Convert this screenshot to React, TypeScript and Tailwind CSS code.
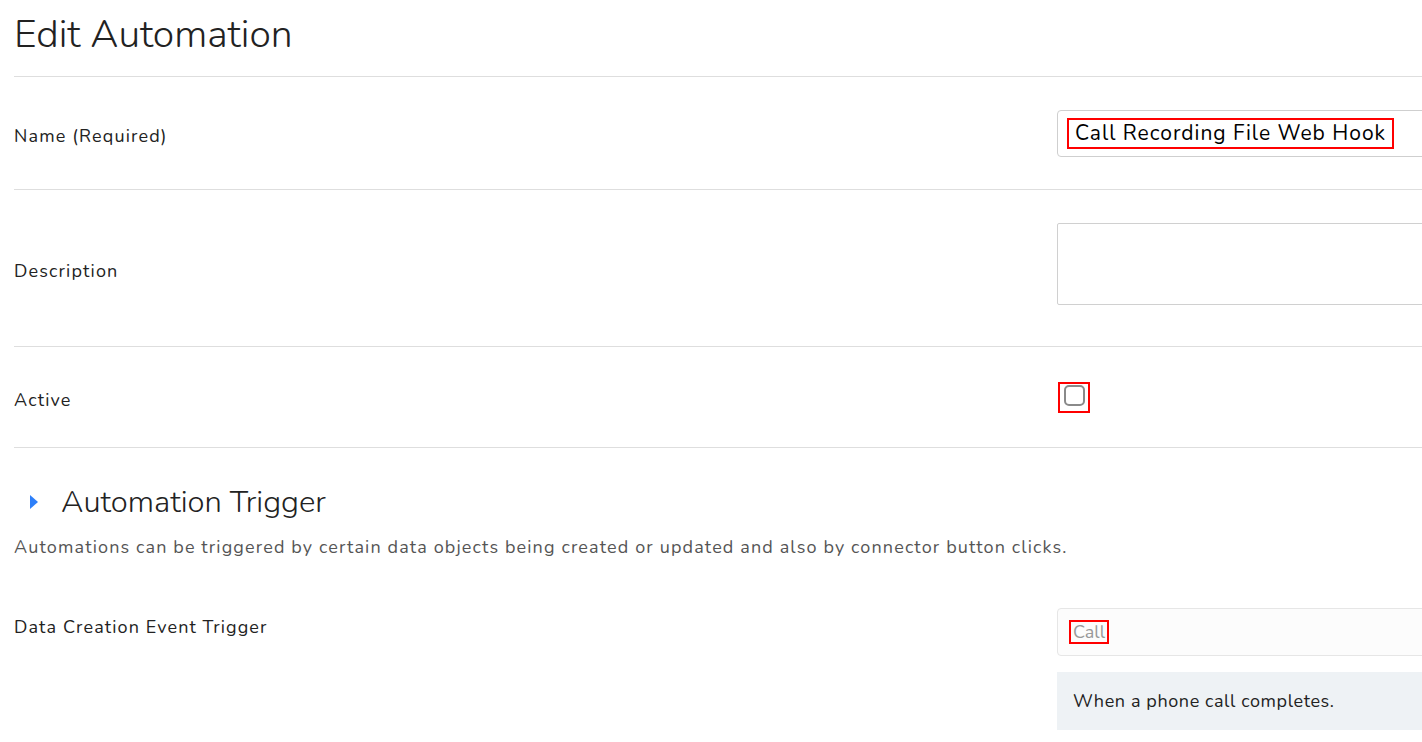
import React from "react";

const font = { fontFamily: '"Nunito", "Lato", "Noto Sans", sans-serif' };

function Row({ label, children, className }: { label: string; children: React.ReactNode; className: string }) {
  return (
    <div className={`flex items-center border-b border-[#dedede] ${className}`}>
      <div className="w-[1043px] shrink-0 text-[18px] text-[#222] tracking-[1.15px] pt-[6px]">{label}</div>
      <div className="flex-1 min-w-0">{children}</div>
    </div>
  );
}

export default function App() {
  return (
    <div className="w-[1422px] h-[742px] overflow-hidden bg-white" style={font}>
      <div className="pl-[14px] w-[1700px]">
        <h1 className="text-[39px] font-light text-[#222] leading-none pt-[15px] pb-[22px] border-b border-[#dedede]">
          Edit Automation
        </h1>
        <Row label="Name (Required)" className="h-[113px]">
          <div className="w-[420px] h-[47px] border border-[#cfcfcf] rounded-[4px] flex items-center pl-[9px]">
            <span className="border-2 border-[#ff0000] px-[6px] text-[21px] leading-[27px] text-black tracking-[1px]">
              Call Recording File Web Hook
            </span>
          </div>
        </Row>
        <Row label="Description" className="h-[157px]">
          <div className="w-[420px] h-[82px] border border-[#d0d0d0] rounded-[2px] mb-[8px]" />
        </Row>
        <Row label="Active" className="h-[101px]">
          <div className="w-[32px] h-[31px] border-2 border-[#ff0000] flex items-center justify-center ml-[1px]">
            <div className="w-[21px] h-[21px] border-2 border-[#8a8a8a] rounded-[5px] -mt-[3px]" />
          </div>
        </Row>
        <div className="flex items-center pt-[38px]">
          <svg width="9" height="14" viewBox="0 0 9 14" className="ml-[16px] mr-[22px]">
            <path d="M0 0 L8 7 L0 14 Z" fill="#2d7ff9" />
          </svg>
          <h2 className="text-[31px] font-light text-[#222] leading-[32px]">Automation Trigger</h2>
        </div>
        <p className="text-[18px] text-[#555] leading-[24px] tracking-[1.13px] pt-[17px]">
          Automations can be triggered by certain data objects being created or updated and also by connector button clicks.
        </p>
        <div className="flex items-start pt-[49px]">
          <div className="w-[1043px] shrink-0 text-[18px] text-[#222] tracking-[1.1px] pt-[6px]">Data Creation Event Trigger</div>
          <div className="flex-1 flex flex-col gap-[16px]">
            <div className="w-[420px] h-[48px] border border-[#e6e6e6] rounded-[4px] bg-[#fcfcfc] flex items-center pl-[11px]">
              <span className="border-2 border-[#ff0000] px-[2px] text-[18px] leading-[20px] text-[#999]">Call</span>
            </div>
            <div className="w-[420px] h-[58px] bg-[#eef2f5] flex items-center pl-[16px] text-[18px] text-[#222] tracking-[0.6px]">
              When a phone call completes.
            </div>
          </div>
        </div>
      </div>
    </div>
  );
}
